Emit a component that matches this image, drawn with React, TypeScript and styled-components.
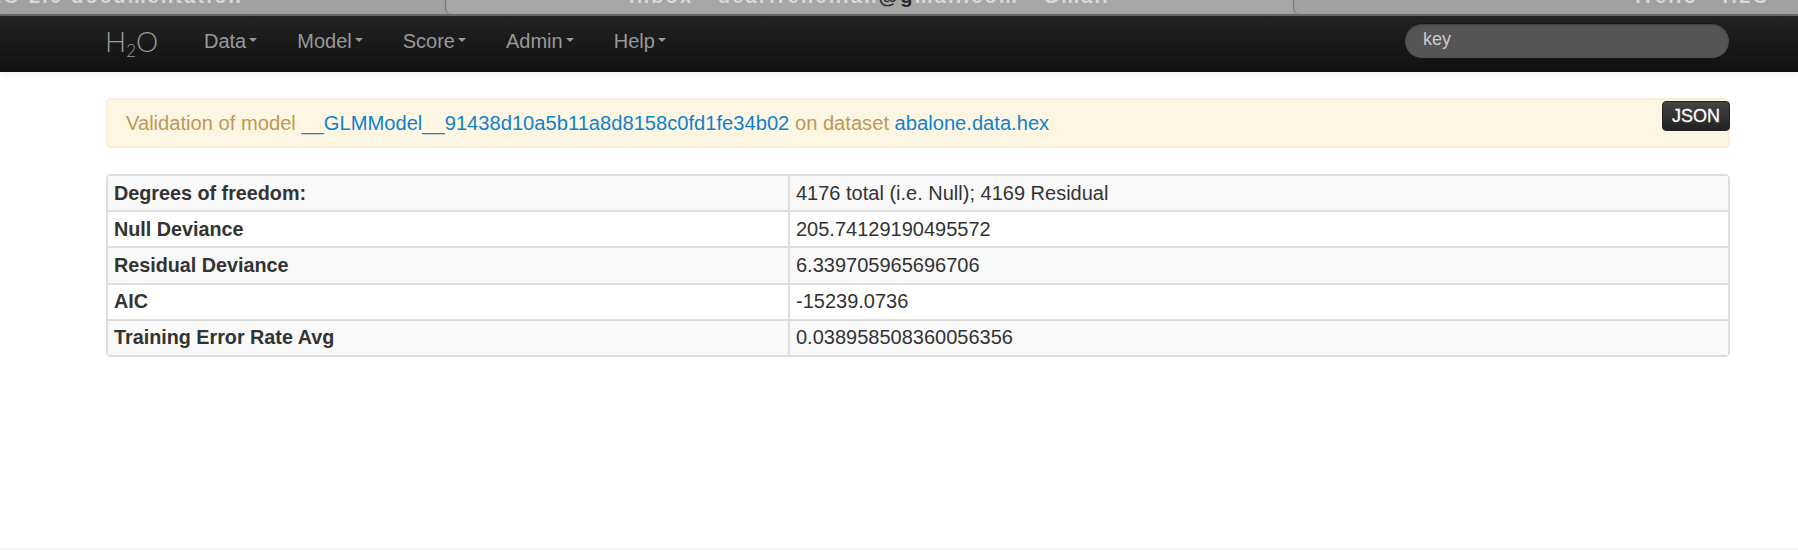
import styled, { createGlobalStyle } from "styled-components";

const GlobalStyle = createGlobalStyle`
  html, body {
    margin: 0;
    padding: 0;
    background: #fff;
  }
  body {
    height: 550px;
    overflow: hidden;
    font-family: "Liberation Sans", Arial, sans-serif;
    font-size: 20px;
    color: #333;
  }
`;

const Page = styled.div`
  height: 550px;
  display: flex;
  flex-direction: column;
  box-sizing: border-box;
  border-bottom: 2px solid #f5f5f5;
`;

const TabStrip = styled.div`
  height: 16px;
  flex: none;
  display: flex;
  overflow: hidden;
  background: #9d9d9d;
  border-bottom: 2px solid #6a6a6a;
  box-sizing: border-box;
`;

const Tab = styled.div<{ $width: number; $active?: boolean; $pad?: number }>`
  width: ${(p) => p.$width}px;
  flex: none;
  box-sizing: border-box;
  display: flex;
  justify-content: center;
  padding-left: ${(p) => p.$pad || 0}px;
  border-left: 1px solid #707070;
  border-bottom-left-radius: 6px;
  background: ${(p) => (p.$active ? "#a6a6a6" : "#a1a1a1")};
  color: #d8d8d8;
  font-size: 20px;
  font-weight: bold;
  letter-spacing: 2.2px;
  line-height: 0;
  white-space: nowrap;
`;

const FirstTab = styled(Tab)`
  justify-content: flex-end;
  padding-right: 202px;
  border-left: 0;
  border-bottom-left-radius: 0;
`;

const TabTitle = styled.span`
  margin-top: -4px;
`;

const DarkBit = styled.span`
  color: #2b2b2b;
`;

const NavBar = styled.nav`
  height: 56px;
  flex: none;
  box-sizing: border-box;
  display: flex;
  align-items: center;
  padding: 0 68px 6px 105px;
  background: linear-gradient(#222222, #111111);
  box-shadow: 0 1px 8px rgba(0, 0, 0, 0.08);
`;

const Brand = styled.a`
  width: 99px;
  flex: none;
  color: #9a9a9a;
  font-family: Lato, "Liberation Sans", sans-serif;
  font-weight: 300;
  font-size: 28px;
  line-height: 1;
  sub {
    font-size: 17px;
    line-height: 0;
    vertical-align: -5px;
  }
`;

const NavMenu = styled.ul`
  display: flex;
  flex: 1;
  margin: 0;
  padding: 0;
  list-style: none;
`;

const NavItem = styled.li`
  display: flex;
  align-items: center;
  margin-right: 40px;
  color: #999;
  font-size: 20px;
`;

const Caret = styled.span`
  width: 0;
  height: 0;
  margin-left: 3px;
  margin-bottom: 3px;
  border-top: 4px solid #999;
  border-left: 4px solid transparent;
  border-right: 4px solid transparent;
`;

const SearchInput = styled.input`
  width: 326px;
  height: 36px;
  flex: none;
  box-sizing: border-box;
  padding: 0 18px 3px;
  border: 1px solid #151515;
  border-radius: 18px;
  background: #555;
  box-shadow: inset 0 1px 2px rgba(0, 0, 0, 0.3);
  font-family: "Liberation Sans", Arial, sans-serif;
  font-size: 18px;
  outline: none;
  &::placeholder {
    color: #ccc;
    opacity: 1;
  }
`;

const Content = styled.main`
  padding: 26px 68px 0 106px;
`;

const Alert = styled.div`
  position: relative;
  height: 50px;
  box-sizing: border-box;
  display: flex;
  align-items: center;
  padding: 0 20px 0 18px;
  margin-bottom: 26px;
  border: 2px solid #fbeed5;
  border-radius: 5px;
  background: #fdf6e3;
  color: #c09853;
  font-size: 20.15px;
  white-space: pre;
`;

const Link = styled.a`
  color: #0f82cc;
`;

const JsonButton = styled.button`
  position: absolute;
  top: 1px;
  right: -2px;
  width: 68px;
  height: 30px;
  padding: 0;
  border: 1px solid #222;
  border-radius: 4px;
  background: linear-gradient(#444444, #222222);
  color: #fff;
  font-family: "Liberation Sans", Arial, sans-serif;
  font-size: 18px;
  -webkit-text-stroke: 0.3px #fff;
`;

const Table = styled.table`
  width: 100%;
  table-layout: fixed;
  border-collapse: separate;
  border-spacing: 0;
  border: 2px solid #ddd;
  border-radius: 5px;
  font-size: 20px;
`;

const Row = styled.tr<{ $odd: boolean }>`
  background: ${(p) => (p.$odd ? "#f9f9f9" : "#fff")};
  &:not(:first-child) > * {
    border-top: 2px solid #ddd;
  }
`;

const KeyCell = styled.th`
  width: 674px;
  height: 34.2px;
  padding: 0 0 0 6px;
  text-align: left;
  font-size: 19.75px;
  font-weight: bold;
  color: #333;
`;

const ValueCell = styled.td`
  padding: 0 0 0 6px;
  border-left: 2px solid #ddd;
  color: #333;
`;

const stats = [
  ["Degrees of freedom:", "4176 total (i.e. Null); 4169 Residual"],
  ["Null Deviance", "205.74129190495572"],
  ["Residual Deviance", "6.339705965696706"],
  ["AIC", "-15239.0736"],
  ["Training Error Rate Avg", "0.038958508360056356"],
];

const menus = ["Data", "Model", "Score", "Admin", "Help"];

export default function App() {
  return (
    <Page>
      <GlobalStyle />
      <TabStrip>
        <FirstTab $width={445}>
          <TabTitle>H2O 2.0 documentation</TabTitle>
        </FirstTab>
        <Tab $width={848} $active>
          <TabTitle>
            Inbox - dearfrenchian<DarkBit>@g</DarkBit>mail.com - Gmail
          </TabTitle>
        </Tab>
        <Tab $width={505} $pad={310}>
          <TabTitle>Trello - H2O</TabTitle>
        </Tab>
      </TabStrip>
      <NavBar>
        <Brand>
          H<sub>2</sub>O
        </Brand>
        <NavMenu>
          {menus.map((m) => (
            <NavItem key={m}>
              {m}
              <Caret />
            </NavItem>
          ))}
        </NavMenu>
        <SearchInput placeholder="key" />
      </NavBar>
      <Content>
        <Alert>
          Validation of model <Link>__GLMModel__91438d10a5b11a8d8158c0fd1fe34b02</Link> on dataset{" "}
          <Link>abalone.data.hex</Link>
          <JsonButton>JSON</JsonButton>
        </Alert>
        <Table>
          <tbody>
            {stats.map(([k, v], i) => (
              <Row key={k} $odd={i % 2 === 0}>
                <KeyCell>{k}</KeyCell>
                <ValueCell>{v}</ValueCell>
              </Row>
            ))}
          </tbody>
        </Table>
      </Content>
    </Page>
  );
}
